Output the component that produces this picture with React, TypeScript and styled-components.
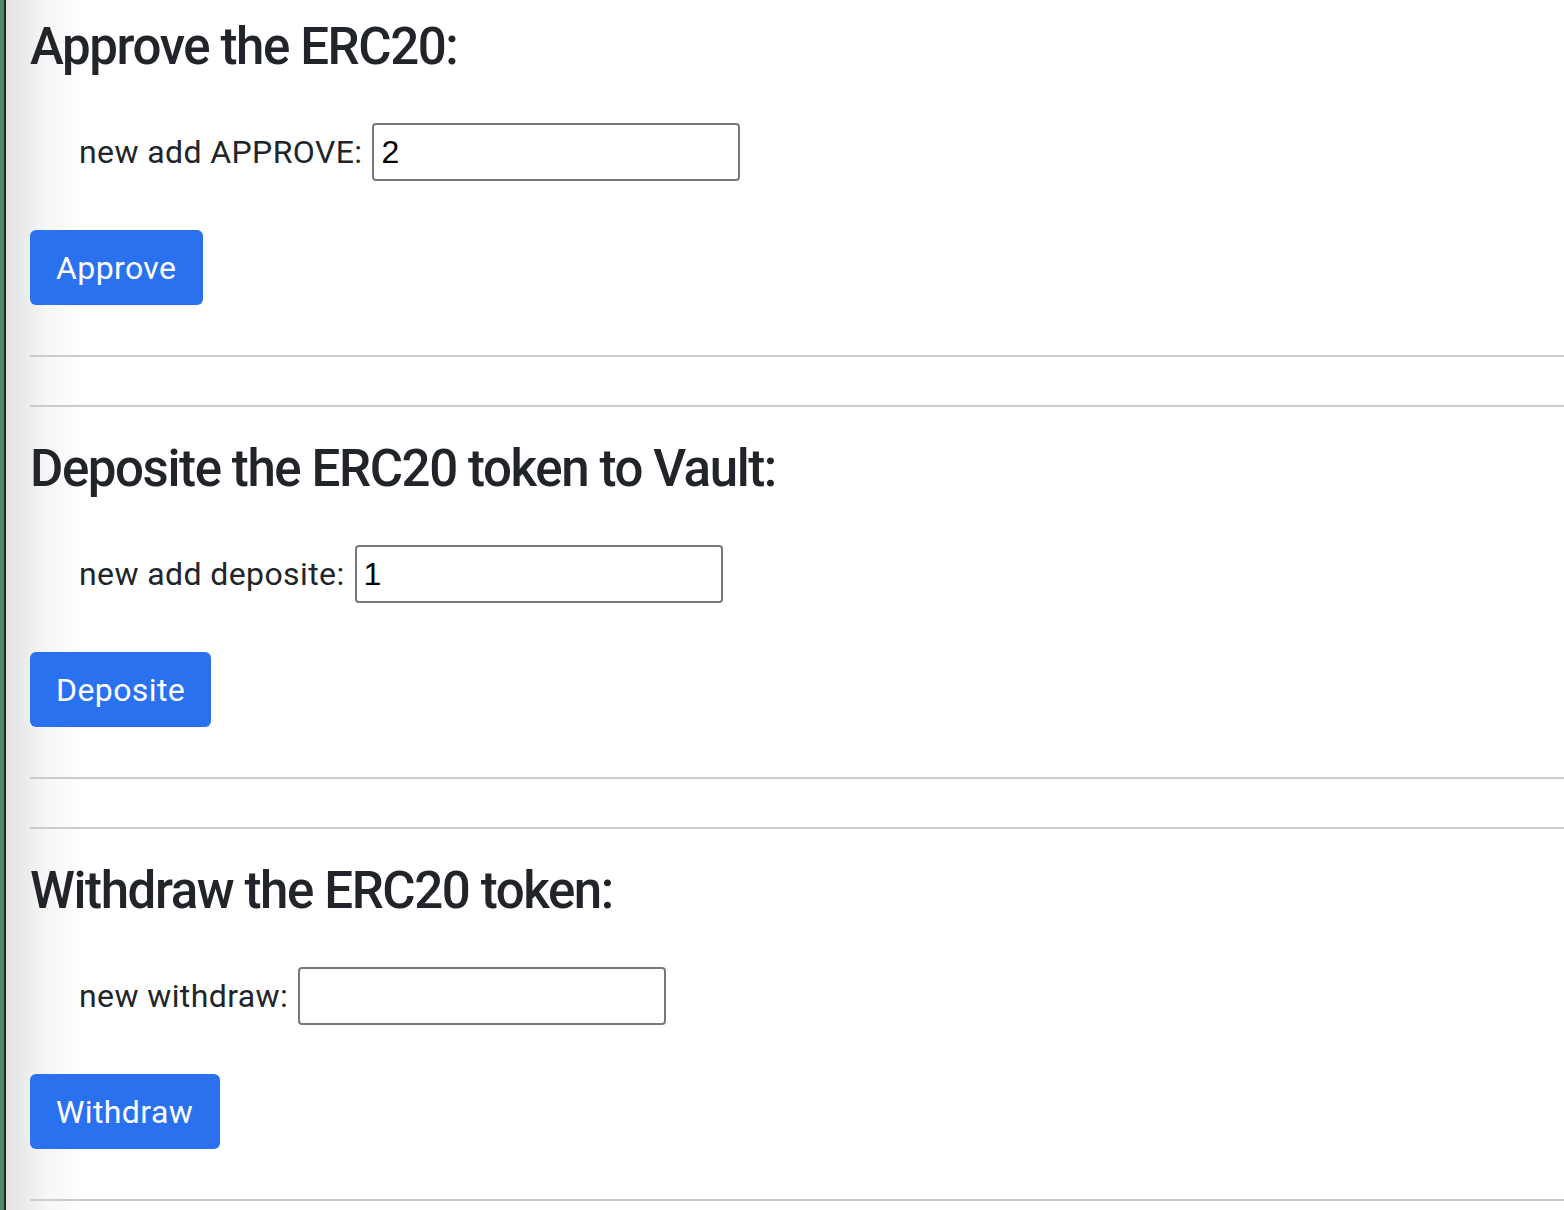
import React from "react";
import styled, { createGlobalStyle } from "styled-components";

const Global = createGlobalStyle`
  html, body { margin: 0; padding: 0; background: #fff; }
  body { font-family: Roboto, "Liberation Sans", Arial, sans-serif; color: #212529; }
  * { box-sizing: border-box; }
`;

const Page = styled.div`
  display: flex;
  min-height: 1210px;
  width: 1564px;
`;

const Edge = styled.div`
  width: 6px;
  flex: none;
  background: linear-gradient(to right, #4d8a6e 0 4px, #1f2a25 4px 6px);
`;

const Main = styled.main`
  flex: 1;
  padding: 16px 0 0 24px;
  background: linear-gradient(to right, #e2e2e2 0px, #f6f6f6 40px, #ffffff 75px);
  display: flex;
  flex-direction: column;
  gap: 31px;
`;

const Section = styled.section`
  display: flex;
  flex-direction: column;
  align-items: flex-start;
`;

const Title = styled.h3`
  margin: 0;
  font-size: 51px;
  line-height: 61px;
  font-weight: 500;
  letter-spacing: -1.4px;
  color: #212529;
`;

const Row = styled.div`
  display: flex;
  align-items: center;
  gap: 10px;
  margin: 46px 0 0 49px;
`;

const Label = styled.label`
  font-size: 32px;
  line-height: 40px;
  letter-spacing: 0.4px;
  color: #212529;
`;

const Input = styled.input`
  width: 368px;
  height: 58px;
  border: 2px solid #777;
  border-radius: 4px;
  padding: 0 7px;
  font-family: "Liberation Sans", Arial, sans-serif;
  font-size: 32px;
  color: #000;
  background: #fff;
  outline: none;
`;

const Button = styled.button<{ $w: number }>`
  margin-top: 49px;
  width: ${(p) => p.$w}px;
  height: 75px;
  padding: 0 26px;
  border: none;
  border-radius: 6px;
  background: #2a71ef;
  color: #fff;
  font-family: Roboto, "Liberation Sans", Arial, sans-serif;
  font-size: 32px;
  font-weight: 400;
  letter-spacing: 0.4px;
  text-align: left;
  cursor: pointer;
`;

const Divider = styled.hr`
  align-self: stretch;
  height: 2px;
  border: none;
  background: #cbcbcb;
  margin: 50px 0 0;
`;

const SecondDivider = styled(Divider)`
  margin-top: 48px;
`;

const sections = [
  { title: "Approve the ERC20:", label: "new add APPROVE:", value: "2", button: "Approve", w: 173 },
  { title: "Deposite the ERC20 token to Vault:", label: "new add deposite:", value: "1", button: "Deposite", w: 181 },
  { title: "Withdraw the ERC20 token:", label: "new withdraw:", value: "", button: "Withdraw", w: 190 },
];

export default function App() {
  return (
    <>
      <Global />
      <Page>
        <Edge />
        <Main>
          {sections.map((s) => (
            <Section key={s.title}>
              <Title>{s.title}</Title>
              <Row>
                <Label>{s.label}</Label>
                <Input defaultValue={s.value} />
              </Row>
              <Button $w={s.w}>{s.button}</Button>
              <Divider />
              <SecondDivider />
            </Section>
          ))}
        </Main>
      </Page>
    </>
  );
}
